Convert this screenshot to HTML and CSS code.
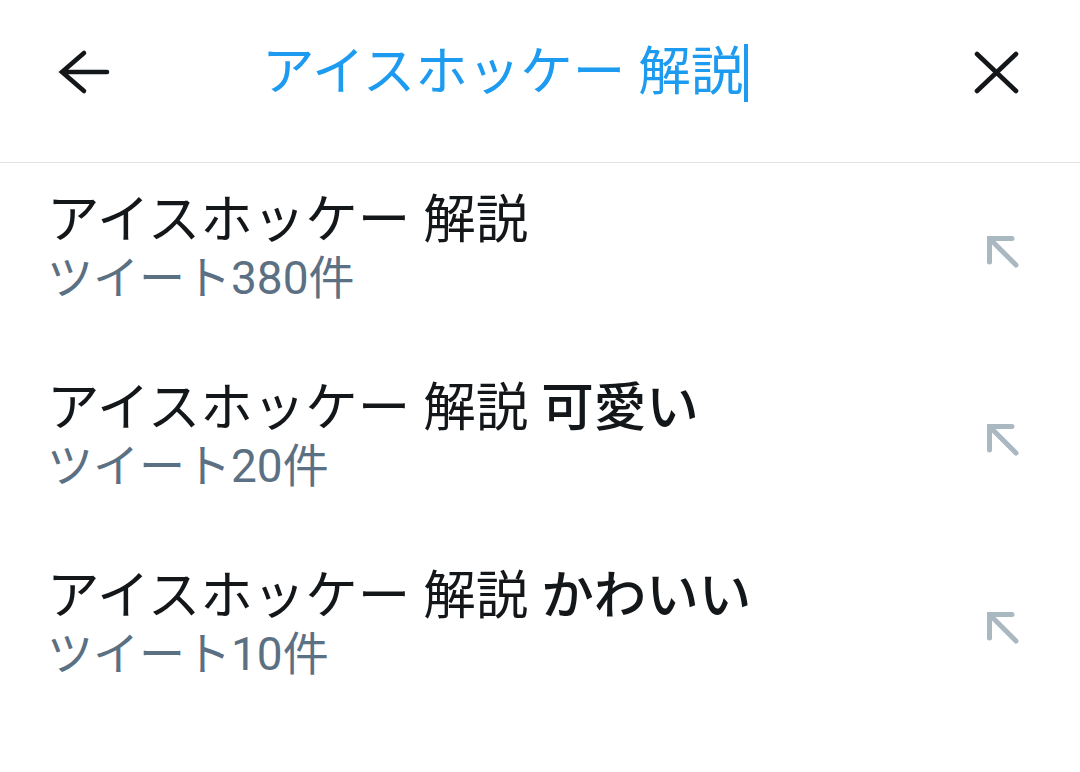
FILE: index.html
```html
<!DOCTYPE html>
<html>

<head>
    <title>検索</title>
    <meta name="viewport" content="width=device-width, minimum-scale=1.0" />
    <link rel="stylesheet" href="styles.css">
</head>

<body>
    <div class="search-bar">
        <svg class="back" width="56" height="48" viewBox="0 0 56 48">
            <path d="M28 5 L6 24 L28 43 M6 24 H51" fill="none" stroke="#14171a" stroke-width="4.6" stroke-linecap="round" />
        </svg>
        <div class="query">
            <span class="query-text">アイスホッケー 解説</span><span class="caret"></span>
        </div>
        <svg class="clear" width="48" height="48" viewBox="0 0 48 48">
            <path d="M5 6 L44 43 M44 6 L5 43" fill="none" stroke="#14171a" stroke-width="4.6" stroke-linecap="round" />
        </svg>
    </div>

    <ul class="suggest">
        <li class="item">
            <div class="item-body">
                <div class="item-title">アイスホッケー 解説</div>
                <div class="item-count">ツイート380件</div>
            </div>
            <svg class="fill-in" width="40" height="40" viewBox="0 0 40 40">
                <path d="M5.5 29 V5.5 H28 M5.5 5.5 L32 32" fill="none" stroke="#aab8c2" stroke-width="5" stroke-linecap="round" />
            </svg>
        </li>
        <li class="item">
            <div class="item-body">
                <div class="item-title">アイスホッケー 解説 <b>可愛い</b></div>
                <div class="item-count">ツイート20件</div>
            </div>
            <svg class="fill-in" width="40" height="40" viewBox="0 0 40 40">
                <path d="M5.5 29 V5.5 H28 M5.5 5.5 L32 32" fill="none" stroke="#aab8c2" stroke-width="5" stroke-linecap="round" />
            </svg>
        </li>
        <li class="item">
            <div class="item-body">
                <div class="item-title">アイスホッケー 解説 <b>かわいい</b></div>
                <div class="item-count">ツイート10件</div>
            </div>
            <svg class="fill-in" width="40" height="40" viewBox="0 0 40 40">
                <path d="M5.5 29 V5.5 H28 M5.5 5.5 L32 32" fill="none" stroke="#aab8c2" stroke-width="5" stroke-linecap="round" />
            </svg>
        </li>
    </ul>
</body>

</html>
```

FILE: styles.css
```css
body {
    margin: 0;
    background: #fff;
    font-family: "Roboto", "Noto Sans CJK JP", sans-serif;
    color: #14171a;
}

.search-bar {
    display: flex;
    flex-flow: row nowrap;
    align-items: center;

    height: 96px;
    padding: 24px 60px 42px 56px;
    border-bottom: 1px solid #e1e4e6;
}

.query {
    flex: 1;
    display: flex;
    align-items: center;
    margin-left: 150px;
}

.query-text {
    font-size: 52.5px;
    line-height: 60px;
    color: #1d9bf0;
}

.caret {
    display: inline-block;
    width: 4px;
    height: 58px;
    margin-left: 1px;
    margin-top: 2px;
    background: #1d9bf0;
}

.suggest {
    margin: 0;
    padding: 0;
}

.item {
    list-style: none;
    display: flex;
    flex-flow: row nowrap;
    align-items: center;

    height: 116px;
    padding: 27px 56px 45px 47px;
}

.item-body {
    flex: 1;
}

.item-title {
    font-size: 52.5px;
    line-height: 60px;
    white-space: nowrap;
}

.item-title b {
    font-weight: 500;
}

.item-count {
    font-size: 46px;
    line-height: 56px;
    color: #5b7083;
}

.fill-in {
    margin-top: 10px;
}
```
